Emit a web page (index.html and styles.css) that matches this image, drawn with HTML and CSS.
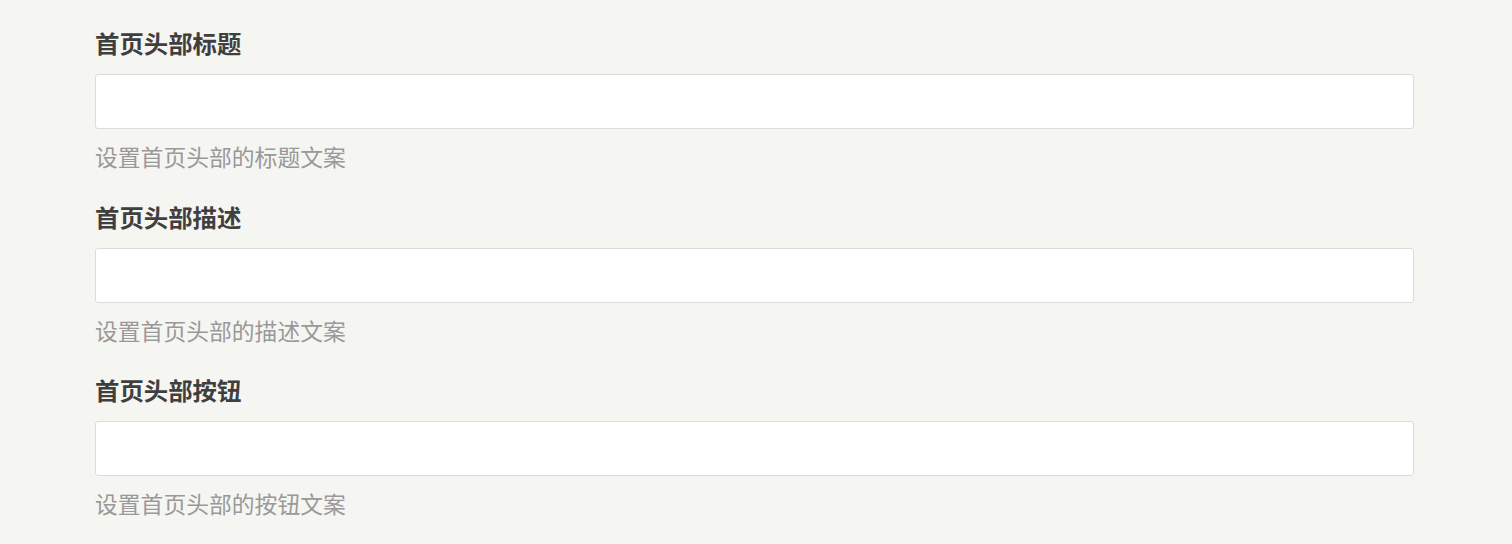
FILE: index.html
```html
<!DOCTYPE html>
<html lang="zh-CN">
<head>
    <meta charset="UTF-8">
    <meta name="viewport" content="width=device-width, initial-scale=1.0">
    <title>首页设置</title>
    <link rel="stylesheet" href="styles.css">
</head>
<body>
    <form class="settings">
        <div class="field">
            <label class="field-label" for="heroTitle">首页头部标题</label>
            <input class="field-input" type="text" id="heroTitle">
            <p class="field-help">设置首页头部的标题文案</p>
        </div>
        <div class="field">
            <label class="field-label" for="heroDesc">首页头部描述</label>
            <input class="field-input" type="text" id="heroDesc">
            <p class="field-help">设置首页头部的描述文案</p>
        </div>
        <div class="field">
            <label class="field-label" for="heroButton">首页头部按钮</label>
            <input class="field-input" type="text" id="heroButton">
            <p class="field-help">设置首页头部的按钮文案</p>
        </div>
    </form>
</body>
</html>
```

FILE: styles.css
```css
body {
    margin: 0;
    background-color: #f5f5f1;
    font-family: "Noto Sans CJK SC", "Noto Sans", sans-serif;
}

.settings {
    width: 1319px;
    padding: 27px 0 0 95px;
    display: flex;
    flex-direction: column;
    gap: 28.5px;
}

.field {
    display: flex;
    flex-direction: column;
}

.field-label {
    font-size: 24.4px;
    line-height: 32px;
    font-weight: bold;
    color: #3f3f3f;
}

.field-input {
    box-sizing: border-box;
    height: 55px;
    margin-top: 15px;
    padding: 0 12px;
    border: 1px solid #dcdcd8;
    border-radius: 3px;
    background-color: #fff;
    font-size: 20px;
    font-family: inherit;
}

.field-help {
    margin: 13px 0 0;
    font-size: 22.8px;
    line-height: 30px;
    color: #999;
}
```
